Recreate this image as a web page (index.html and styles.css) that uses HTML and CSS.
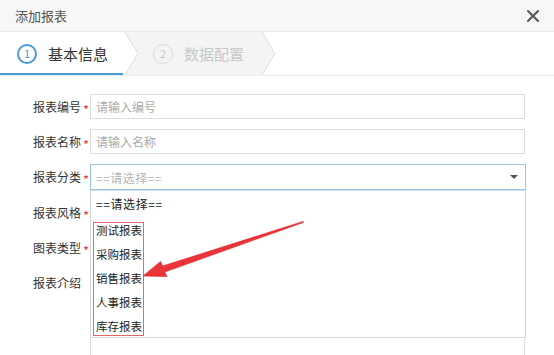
FILE: index.html
```html
<!DOCTYPE html>
<html lang="zh">
<head>
<meta charset="utf-8">
<title>添加报表</title>
<link rel="stylesheet" href="styles.css">
</head>
<body>
<div class="dialog">
  <div class="header">
    <span class="title">添加报表</span>
    <svg class="close" width="14" height="14" viewBox="0 0 14 14"><path d="M2 2 L12 12 M12 2 L2 12" stroke="#555" stroke-width="2" stroke-linecap="round"/></svg>
  </div>
  <div class="steps">
    <svg class="steps-bg" width="554" height="43" viewBox="0 0 554 43">
      <polygon points="125,0 262,0 275,21.5 262,43 125,43 138,21.5" fill="#f4f4f4"/>
      <polyline points="125,0 138,21.5 125,43" fill="none" stroke="#dcdcdc" stroke-width="1"/>
      <polyline points="262,0 275,21.5 262,43" fill="none" stroke="#dcdcdc" stroke-width="1"/>
    </svg>
    <div class="step active"><span class="num">1</span><span class="step-text">基本信息</span></div>
    <div class="step"><span class="num">2</span><span class="step-text">数据配置</span></div>
  </div>
  <div class="form">
    <div class="row">
      <label class="label">报表编号<i class="req">*</i></label>
      <div class="input placeholder">请输入编号</div>
    </div>
    <div class="row">
      <label class="label">报表名称<i class="req">*</i></label>
      <div class="input placeholder">请输入名称</div>
    </div>
    <div class="row">
      <label class="label">报表分类<i class="req">*</i></label>
      <div class="select-wrap">
        <div class="input select placeholder">
          <span>==请选择==</span>
          <span class="caret"></span>
        </div>
        <div class="dropdown">
          <div class="opt first">==请选择==</div>
          <div class="group">
            <div class="opt">测试报表</div>
            <div class="opt">采购报表</div>
            <div class="opt">销售报表</div>
            <div class="opt">人事报表</div>
            <div class="opt">库存报表</div>
          </div>
        </div>
      </div>
    </div>
    <div class="row">
      <label class="label">报表风格<i class="req">*</i></label>
      <div class="input"></div>
    </div>
    <div class="row">
      <label class="label">图表类型<i class="req">*</i></label>
      <div class="input"></div>
    </div>
    <div class="row last">
      <label class="label">报表介绍<i class="req"></i></label>
      <div class="input textarea"></div>
    </div>
  </div>
  <svg class="pointer" width="554" height="355" viewBox="0 0 554 355">
    <polygon points="143,276 160.6,261.4 162.6,266 303.2,221.4 303.4,222.4 164.8,272 167,276.6" fill="#ec3338" stroke="#d8262b" stroke-width="0.6" stroke-linejoin="round"/>
  </svg>
</div>
</body>
</html>
```
FILE: styles.css
```css
* { box-sizing: border-box; }
html, body { margin: 0; padding: 0; background: #fff; }
body {
  width: 554px;
  height: 355px;
  overflow: hidden;
  font-family: "Noto Sans CJK SC", "Noto Sans", sans-serif;
  font-size: 12px;
  color: #333;
}
.dialog { position: relative; width: 554px; height: 355px; overflow: hidden; }
.header {
  height: 32px;
  padding: 0 14px 0 15px;
  display: flex;
  align-items: center;
  justify-content: space-between;
  background: #f7f7f7;
  border-bottom: 1px solid #e8e8e8;
}
.title { font-size: 13px; color: #555; }
.close { display: block; margin-top: 1px; }
.steps {
  position: relative;
  height: 44px;
  display: flex;
  border-bottom: 1px solid #eee;
}
.steps-bg { position: absolute; left: 0; top: 0; }
.step {
  position: relative;
  display: flex;
  align-items: center;
  height: 43px;
  color: #c8c8c8;
}
.step.active {
  width: 123px;
  padding-left: 17px;
  color: #333;
  border-bottom: 2px solid #4b9ad6;
  padding-top: 2px;
}
.step:not(.active) { padding-left: 30px; }
.num {
  width: 20px;
  height: 20px;
  border-radius: 50%;
  border: 1.5px solid #dcdcdc;
  display: flex;
  align-items: center;
  justify-content: center;
  font-size: 11px;
  line-height: 1;
  margin-right: 11px;
}
.step.active .num { border: 2px solid #4b9ad6; color: #4b9ad6; }
.step-text { font-size: 15px; }
.form { padding-top: 18px; }
.row {
  display: flex;
  align-items: flex-start;
  margin-bottom: 10px;
}
.row.last { margin-bottom: 0; }
.label {
  width: 90px;
  flex: none;
  display: flex;
  justify-content: flex-end;
  align-items: center;
  height: 25px;
  font-size: 12px;
  color: #333;
}
.req {
  width: 8px;
  height: 25px;
  font-style: normal;
  color: #e23b3b;
  text-align: center;
  font-size: 13px;
  line-height: 31px;
  margin-left: 1px;
}
.input {
  width: 435px;
  height: 25px;
  border: 1px solid #dcdcdc;
  padding-left: 5px;
  display: flex;
  align-items: center;
  font-size: 12px;
}
.placeholder { color: #aaa; }
.textarea { height: 86px; border-bottom: none; }
.select-wrap { position: relative; z-index: 2; }
.select {
  width: 436px;
  height: 26px;
  border-color: #98c6ea;
  justify-content: space-between;
  padding-right: 7px;
  color: #b5b5b5;
  letter-spacing: 0.5px;
}
.caret {
  width: 0;
  height: 0;
  border-left: 4px solid transparent;
  border-right: 4px solid transparent;
  border-top: 4px solid #555;
}
.dropdown {
  position: absolute;
  left: 0;
  top: 26px;
  width: 436px;
  height: 148px;
  background: #fff;
  border: 1px solid #d6d6d6;
  border-top: 1px solid #c9def0;
  padding-top: 1px;
}
.opt {
  height: 24px;
  line-height: 24px;
  padding-left: 4px;
  color: #222;
  font-size: 12px;
}
.opt.first { padding-left: 5px; letter-spacing: 0.6px; }
.group {
  margin: 6px 0 0 2px;
  width: 51px;
  height: 114px;
  border: 1px solid #e06868;
}
.group .opt { padding-left: 2px; font-size: 11.5px; }
.group .opt:first-child { margin-top: -5px; }
.pointer { position: absolute; left: 0; top: 0; pointer-events: none; z-index: 5; }
```
